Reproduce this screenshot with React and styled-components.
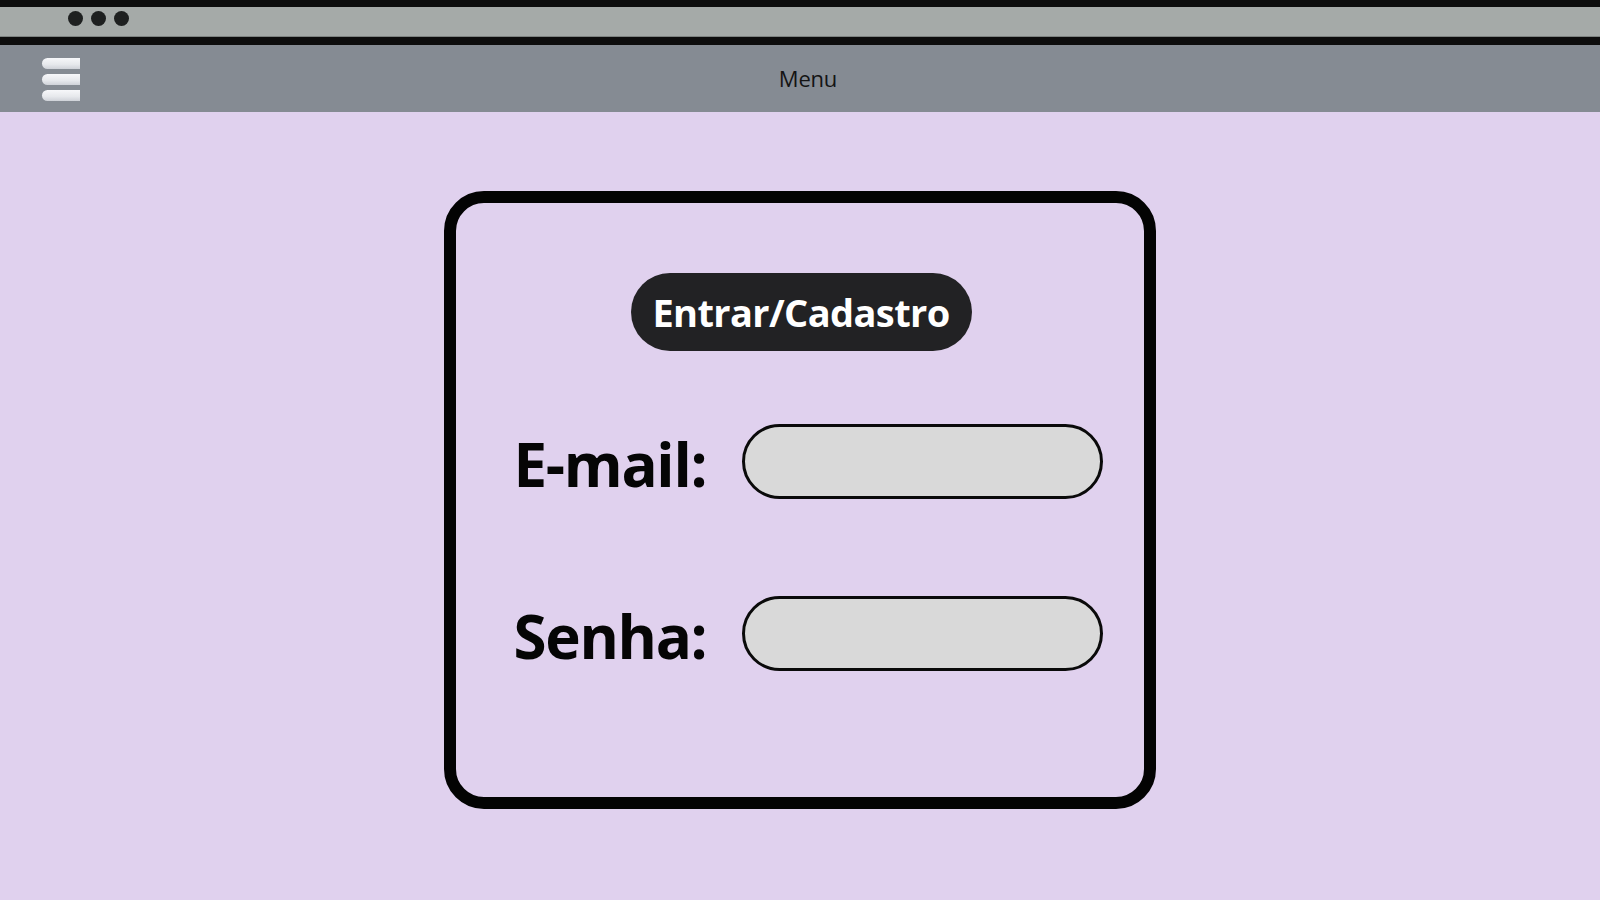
import React from "react";
import styled, { createGlobalStyle } from "styled-components";

const Global = createGlobalStyle`
  html, body {
    margin: 0;
    padding: 0;
    background: #e0d1ee;
  }
  * { box-sizing: border-box; }
  body {
    font-family: "Open Sans", "Noto Sans", sans-serif;
  }
`;

const Page = styled.div`
  width: 1600px;
  height: 900px;
  display: flex;
  flex-direction: column;
  background: #e0d1ee;
  overflow: hidden;
`;

const TitleBar = styled.div`
  height: 45px;
  background: #0d0d0d;
  padding: 7px 0 8px;
  display: flex;
  flex-direction: column;
`;

const TitleBarInner = styled.div`
  flex: 1;
  background: #a5aaa8;
  border-bottom: 1px solid #7d8280;
  display: flex;
  align-items: center;
  gap: 8px;
  padding-left: 68px;
  padding-bottom: 7px;
`;

const Dot = styled.span`
  width: 15px;
  height: 15px;
  border-radius: 50%;
  background: #1e2020;
`;

const MenuBar = styled.div`
  height: 67px;
  background: #858b93;
  display: flex;
  align-items: center;
  padding-left: 42px;
`;

const Burger = styled.div`
  width: 38px;
  display: flex;
  flex-direction: column;
  gap: 5px;
  margin-top: 2px;
`;

const BurgerBar = styled.span`
  display: block;
  height: 11px;
  border-radius: 6px 0 0 6px;
  background: linear-gradient(#f7f8fa, #e6e8ec 60%, #cfd2d8);
`;

const MenuTitle = styled.div`
  flex: 1;
  text-align: center;
  padding-right: 64px;
  padding-bottom: 2px;
  font-family: "Open Sans", "Noto Sans", sans-serif;
  font-size: 22px;
  color: #141414;
  letter-spacing: -0.2px;
`;

const Main = styled.main`
  flex: 1;
  display: flex;
  justify-content: center;
  padding-top: 79px;
`;

const Card = styled.section`
  width: 712px;
  height: 618px;
  border: 12px solid #030303;
  border-radius: 40px;
  display: flex;
  flex-direction: column;
  align-items: center;
  padding-top: 70px;
`;

const PillButton = styled.button`
  height: 78px;
  width: 341px;
  border: none;
  border-radius: 39px;
  background: #222224;
  color: #ffffff;
  font-family: "Open Sans", "Noto Sans", sans-serif;
  font-weight: 700;
  font-size: 38px;
  letter-spacing: -0.6px;
  padding: 0;
  cursor: pointer;
  margin-left: 2px;
`;

const Form = styled.div`
  margin-top: 73px;
  display: flex;
  flex-direction: column;
  gap: 97px;
  padding-left: 16px;
`;

const Row = styled.div`
  display: flex;
  align-items: center;
  gap: 28px;
`;

const Label = styled.label`
  width: 200px;
  font-family: "Open Sans", "Noto Sans", sans-serif;
  font-weight: 700;
  font-size: 60px;
  line-height: 1;
  color: #050505;
  letter-spacing: -1.3px;
  padding-top: 4px;
`;

const Field = styled.input`
  width: 361px;
  height: ${(p) => p.$h}px;
  border: 3px solid #0a0a0a;
  border-radius: 40px;
  background: #d9d9d9;
  outline: none;
  padding: 0 24px;
  font-size: 20px;
  font-family: "Open Sans", sans-serif;
`;

export default function App() {
  return (
    <>
      <Global />
      <Page>
        <TitleBar>
          <TitleBarInner>
            <Dot />
            <Dot />
            <Dot />
          </TitleBarInner>
        </TitleBar>
        <MenuBar>
          <Burger>
            <BurgerBar />
            <BurgerBar />
            <BurgerBar />
          </Burger>
          <MenuTitle>Menu</MenuTitle>
        </MenuBar>
        <Main>
          <Card>
            <PillButton>Entrar/Cadastro</PillButton>
            <Form>
              <Row>
                <Label htmlFor="email">E-mail:</Label>
                <Field id="email" type="email" $h={75} />
              </Row>
              <Row>
                <Label htmlFor="senha">Senha:</Label>
                <Field id="senha" type="password" $h={75} />
              </Row>
            </Form>
          </Card>
        </Main>
      </Page>
    </>
  );
}
